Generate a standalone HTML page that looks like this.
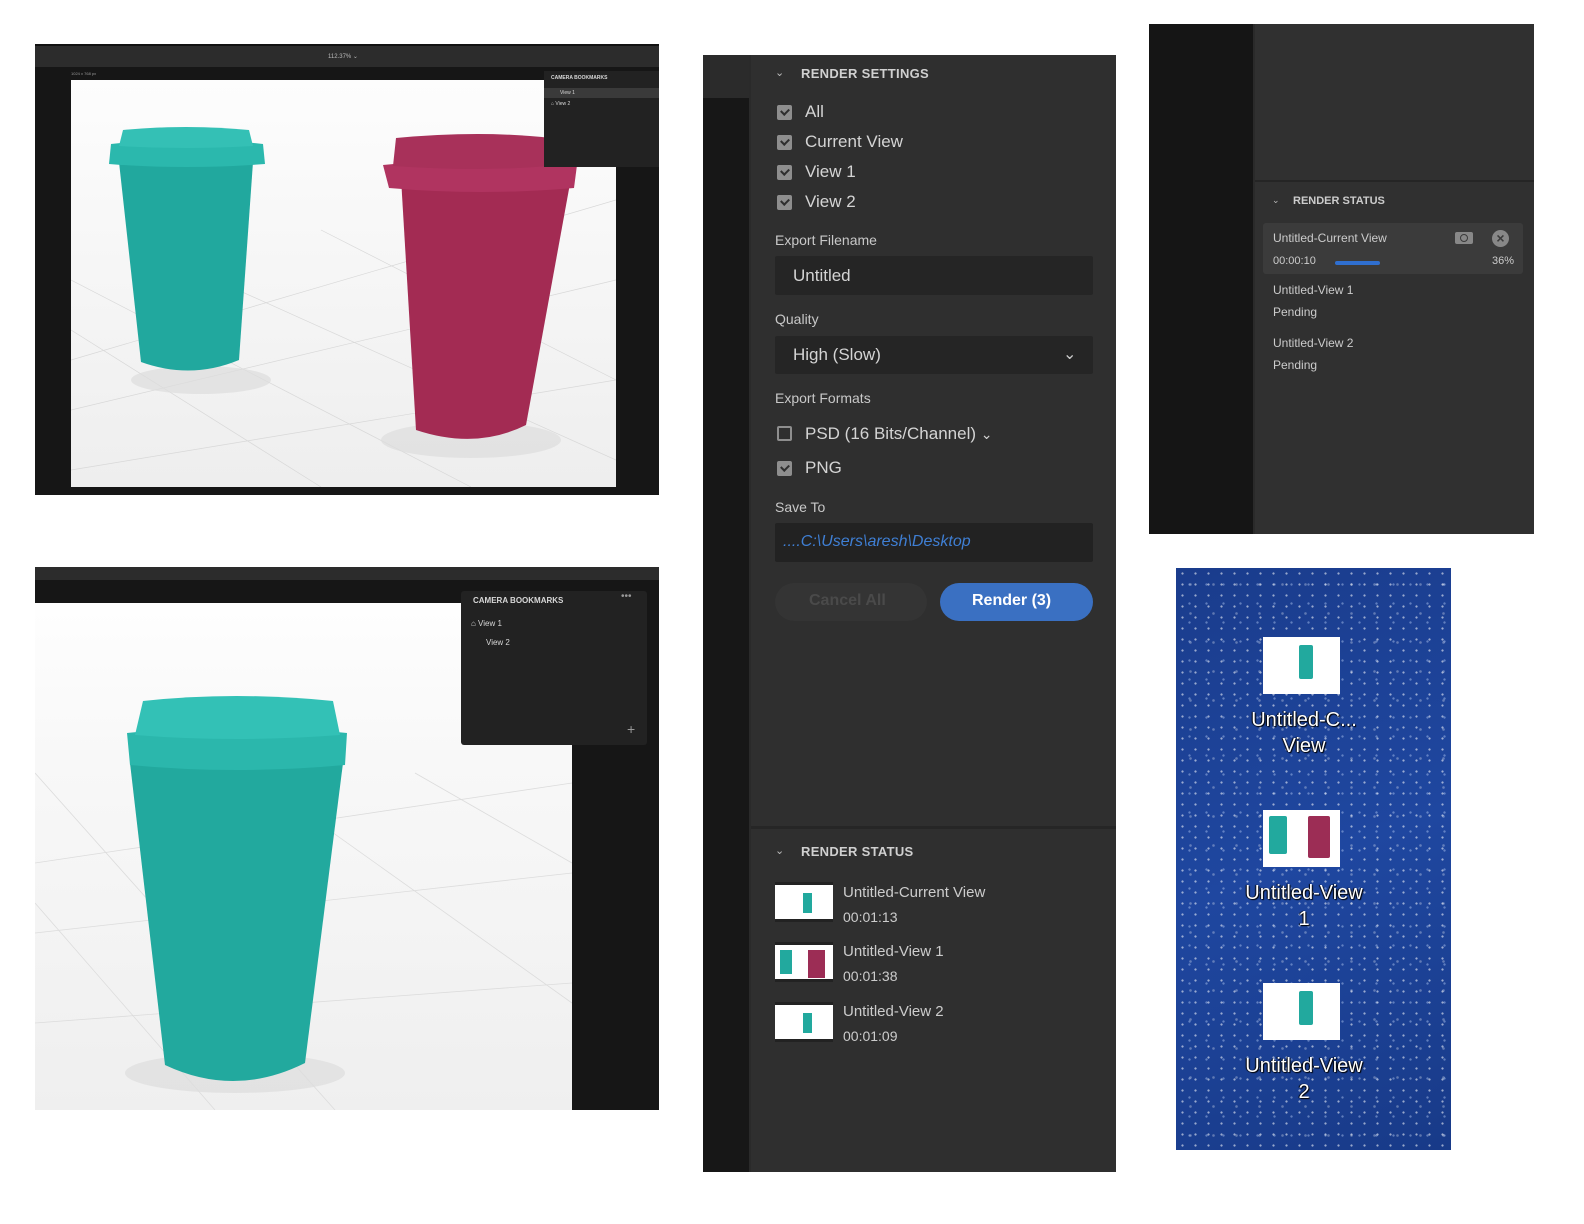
<!DOCTYPE html>
<html><head><meta charset="utf-8"><style>
*{margin:0;padding:0;box-sizing:border-box}
body{width:1584px;height:1224px;background:#fff;position:relative;overflow:hidden;font-family:"Liberation Sans",sans-serif}
.a{position:absolute}
.t{color:#d8d8d8;white-space:nowrap}
.cb{position:absolute;width:15px;height:15px;background:#8e8e8e;border-radius:2px}
.cb:after{content:"";position:absolute;left:4px;top:3px;width:6px;height:4px;border-left:2px solid #2f2f2f;border-bottom:2px solid #2f2f2f;transform:rotate(-45deg)}
.lbl{font-size:14px;color:#c8c8c8}
.big{font-size:17px;color:#d4d4d4}
.hd{font-size:13px;font-weight:bold;color:#d0d0d0;letter-spacing:.3px}
.thumb{position:absolute;width:58px;height:40px;background:#fff;border-top:3px solid #222;border-bottom:3px solid #222}
.desk{font-size:20px;color:#fff;text-shadow:1px 1px 1px #000,-1px 0 1px #000;text-align:center;width:150px;line-height:26px}
</style></head><body>

<!-- top-left viewport -->
<div class="a" style="left:35px;top:44px;width:624px;height:451px;background:#161616"></div>
<div class="a" style="left:35px;top:44px;width:624px;height:23px;background:#2c2c2c;border-top:2px solid #111"></div>
<div class="a t" style="left:328px;top:53px;font-size:6px;color:#bbb">112.37% ⌄</div>
<div class="a t" style="left:71px;top:71px;font-size:4px;color:#999">1024 x 768 px</div>
<div class="a" style="left:71px;top:80px;width:545px;height:407px;background:linear-gradient(#fdfdfd 0%,#f7f7f7 40%,#eeeeee 100%)"></div>
<svg class="a" style="left:71px;top:80px" width="545" height="407">
<g stroke="#d8d8d8" stroke-width="0.7" fill="none">
<path d="M0 280 L545 120 M0 330 L545 200 M0 390 L545 300 M0 200 L400 407 M100 180 L545 380 M250 150 L545 300 M0 250 L250 407"/>
</g>
<ellipse cx="130" cy="300" rx="70" ry="14" fill="#ddd" opacity=".7"/>
<ellipse cx="400" cy="360" rx="90" ry="18" fill="#ddd" opacity=".7"/>
<path d="M48 82 L182 82 L168 280 Q120 300 70 282 Z" fill="#21a89e"/>
<path d="M40 64 Q115 55 192 64 L194 84 Q115 90 38 84 Z" fill="#2bb8ad"/>
<path d="M52 50 Q115 44 178 50 L182 66 Q115 70 48 66 Z" fill="#34c0b5"/>
<path d="M330 98 L500 98 L455 345 Q405 370 345 350 Z" fill="#a32b53"/>
<path d="M312 85 Q410 75 506 85 L503 108 Q410 116 318 108 Z" fill="#b03460"/>
<path d="M325 58 Q410 50 480 58 L478 86 Q410 92 322 86 Z" fill="#a8315a"/>
</svg>
<div class="a" style="left:544px;top:71px;width:115px;height:96px;background:#222"></div>
<div class="a t" style="left:551px;top:75px;font-size:5px;font-weight:bold">CAMERA BOOKMARKS</div>
<div class="a" style="left:544px;top:88px;width:115px;height:10px;background:#3a3a3a"></div>
<div class="a t" style="left:560px;top:90px;font-size:5px">View 1</div>
<div class="a t" style="left:551px;top:101px;font-size:5px">⌂ View 2</div>

<!-- bottom-left viewport -->
<div class="a" style="left:35px;top:567px;width:624px;height:543px;background:#161616"></div>
<div class="a" style="left:35px;top:567px;width:624px;height:13px;background:#2c2c2c"></div>
<div class="a" style="left:35px;top:603px;width:537px;height:507px;background:linear-gradient(#fefefe 0%,#f8f8f8 30%,#efefef 100%)"></div>
<svg class="a" style="left:35px;top:603px" width="537" height="507">
<g stroke="#dcdcdc" stroke-width="0.8" fill="none">
<path d="M0 260 L537 180 M0 330 L537 270 M0 420 L537 380 M0 170 L300 507 M200 160 L537 400 M0 300 L180 507 M380 170 L537 260"/>
</g>
<ellipse cx="200" cy="470" rx="110" ry="20" fill="#ddd" opacity=".7"/>
<path d="M95 160 L308 160 L270 460 Q200 495 130 462 Z" fill="#22a99e"/>
<path d="M92 130 Q200 118 312 130 L310 162 Q200 172 95 162 Z" fill="#2bb7ac"/>
<path d="M108 98 Q200 88 298 98 L305 132 Q200 140 100 132 Z" fill="#33c1b6"/>
</svg>
<div class="a" style="left:461px;top:591px;width:186px;height:154px;background:#222;border-radius:3px"></div>
<div class="a t" style="left:473px;top:596px;font-size:8px;font-weight:bold">CAMERA BOOKMARKS</div>
<div class="a t" style="left:621px;top:591px;font-size:10px;color:#999">•••</div>
<div class="a t" style="left:471px;top:619px;font-size:8px">⌂ View 1</div>
<div class="a t" style="left:486px;top:638px;font-size:8px">View 2</div>
<div class="a t" style="left:627px;top:721px;font-size:14px;color:#999">+</div>

<!-- center panel -->
<div class="a" style="left:703px;top:55px;width:413px;height:1117px;background:#2f2f2f"></div>
<div class="a" style="left:703px;top:55px;width:46px;height:1117px;background:#171717"></div>
<div class="a" style="left:703px;top:55px;width:46px;height:43px;background:#2b2b2b"></div>
<div class="a" style="left:749px;top:55px;width:2px;height:1117px;background:#2a2a2a"></div>
<div class="a t" style="left:775px;top:66px;font-size:11px;color:#bbb">⌄</div>
<div class="a t hd" style="left:801px;top:66px">RENDER SETTINGS</div>
<div class="cb" style="left:777px;top:105px"></div><div class="a t big" style="left:805px;top:102px">All</div>
<div class="cb" style="left:777px;top:135px"></div><div class="a t big" style="left:805px;top:132px">Current View</div>
<div class="cb" style="left:777px;top:165px"></div><div class="a t big" style="left:805px;top:162px">View 1</div>
<div class="cb" style="left:777px;top:195px"></div><div class="a t big" style="left:805px;top:192px">View 2</div>
<div class="a t lbl" style="left:775px;top:232px">Export Filename</div>
<div class="a" style="left:775px;top:256px;width:318px;height:39px;background:#252525;border-radius:2px"></div>
<div class="a t big" style="left:793px;top:266px">Untitled</div>
<div class="a t lbl" style="left:775px;top:311px">Quality</div>
<div class="a" style="left:775px;top:336px;width:318px;height:38px;background:#252525;border-radius:2px"></div>
<div class="a t big" style="left:793px;top:345px">High (Slow)</div>
<div class="a t" style="left:1063px;top:344px;font-size:16px;color:#ccc">⌄</div>
<div class="a t lbl" style="left:775px;top:390px">Export Formats</div>
<div class="a" style="left:777px;top:426px;width:15px;height:15px;border:2px solid #8e8e8e;border-radius:2px"></div>
<div class="a t big" style="left:805px;top:424px">PSD (16 Bits/Channel) <span style="font-size:14px">⌄</span></div>
<div class="cb" style="left:777px;top:461px"></div><div class="a t big" style="left:805px;top:458px">PNG</div>
<div class="a t lbl" style="left:775px;top:499px">Save To</div>
<div class="a" style="left:775px;top:523px;width:318px;height:39px;background:#222;border-radius:2px"></div>
<div class="a t" style="left:783px;top:533px;font-size:16px;color:#3f7fd4;font-style:italic">....C:\Users\aresh\Desktop</div>
<div class="a" style="left:775px;top:583px;width:152px;height:38px;background:#343434;border-radius:19px"></div>
<div class="a t" style="left:809px;top:592px;font-size:16px;font-weight:bold;color:#4a4a4a">Cancel All</div>
<div class="a" style="left:940px;top:583px;width:153px;height:38px;background:#3a70c2;border-radius:19px"></div>
<div class="a t" style="left:972px;top:592px;font-size:16px;font-weight:bold;color:#fff">Render (3)</div>
<div class="a" style="left:751px;top:826px;width:365px;height:3px;background:#262626"></div>
<div class="a t" style="left:775px;top:844px;font-size:11px;color:#bbb">⌄</div>
<div class="a t hd" style="left:801px;top:844px">RENDER STATUS</div>
<div class="thumb" style="left:775px;top:882px"><div class="a" style="left:28px;top:8px;width:9px;height:20px;background:#22a99e"></div></div>
<div class="a t" style="left:843px;top:884px;font-size:15px;color:#ccc">Untitled-Current View</div>
<div class="a t" style="left:843px;top:909px;font-size:14px;color:#ccc">00:01:13</div>
<div class="thumb" style="left:775px;top:942px"><div class="a" style="left:5px;top:5px;width:12px;height:24px;background:#22a99e"></div><div class="a" style="left:33px;top:5px;width:17px;height:28px;background:#9c2d55"></div></div>
<div class="a t" style="left:843px;top:943px;font-size:15px;color:#ccc">Untitled-View 1</div>
<div class="a t" style="left:843px;top:968px;font-size:14px;color:#ccc">00:01:38</div>
<div class="thumb" style="left:775px;top:1002px"><div class="a" style="left:28px;top:8px;width:9px;height:20px;background:#22a99e"></div></div>
<div class="a t" style="left:843px;top:1003px;font-size:15px;color:#ccc">Untitled-View 2</div>
<div class="a t" style="left:843px;top:1028px;font-size:14px;color:#ccc">00:01:09</div>

<!-- right top panel -->
<div class="a" style="left:1149px;top:24px;width:385px;height:510px;background:#303030"></div>
<div class="a" style="left:1149px;top:24px;width:104px;height:510px;background:#151515"></div>
<div class="a" style="left:1253px;top:24px;width:2px;height:510px;background:#2a2a2a"></div>
<div class="a" style="left:1255px;top:180px;width:279px;height:2px;background:#252525"></div>
<div class="a t" style="left:1272px;top:195px;font-size:9px;color:#bbb">⌄</div>
<div class="a t" style="left:1293px;top:195px;font-size:11px;font-weight:bold;color:#ccc">RENDER STATUS</div>
<div class="a" style="left:1263px;top:223px;width:260px;height:51px;background:#3b3b3b;border-radius:3px"></div>
<div class="a t" style="left:1273px;top:231px;font-size:12px;color:#ccc">Untitled-Current View</div>
<div class="a" style="left:1455px;top:232px;width:18px;height:12px;background:#888;border-radius:2px"></div>
<div class="a" style="left:1460px;top:234px;width:8px;height:8px;border:1.5px solid #3b3b3b;border-radius:50%"></div>
<div class="a" style="left:1492px;top:230px;width:17px;height:17px;background:#888;border-radius:50%;color:#3b3b3b;font-size:14px;font-weight:bold;text-align:center;line-height:17px">×</div>
<div class="a t" style="left:1273px;top:255px;font-size:11px;color:#ccc">00:00:10</div>
<div class="a" style="left:1335px;top:261px;width:45px;height:4px;background:#2f6fd0;border-radius:2px"></div>
<div class="a t" style="left:1492px;top:255px;font-size:11px;color:#ccc">36%</div>
<div class="a t" style="left:1273px;top:283px;font-size:12px;color:#ccc">Untitled-View 1</div>
<div class="a t" style="left:1273px;top:305px;font-size:12px;color:#ccc">Pending</div>
<div class="a t" style="left:1273px;top:336px;font-size:12px;color:#ccc">Untitled-View 2</div>
<div class="a t" style="left:1273px;top:358px;font-size:12px;color:#ccc">Pending</div>

<!-- desktop -->
<div class="a" style="left:1176px;top:568px;width:275px;height:582px;background:radial-gradient(circle,rgba(255,255,255,.55) 0.8px,transparent 1.4px) 0 0/13px 11px,radial-gradient(circle,rgba(200,220,255,.4) 0.8px,transparent 1.5px) 5px 7px/17px 19px,radial-gradient(circle,rgba(255,255,255,.3) 1px,transparent 1.6px) 3px 2px/23px 29px,linear-gradient(160deg,#1a3c8c,#1f47a0 50%,#183a88)"></div>
<div class="a" style="left:1263px;top:637px;width:77px;height:57px;background:#fff"><div class="a" style="left:36px;top:8px;width:14px;height:34px;background:#22a99e;border-radius:2px"></div></div>
<div class="a desk" style="left:1229px;top:707px">Untitled-C...<br>View</div>
<div class="a" style="left:1263px;top:810px;width:77px;height:57px;background:#fff"><div class="a" style="left:6px;top:6px;width:18px;height:38px;background:#22a99e;border-radius:2px"></div><div class="a" style="left:45px;top:6px;width:22px;height:42px;background:#9c2d55;border-radius:2px"></div></div>
<div class="a desk" style="left:1229px;top:880px">Untitled-View<br>1</div>
<div class="a" style="left:1263px;top:983px;width:77px;height:57px;background:#fff"><div class="a" style="left:36px;top:8px;width:14px;height:34px;background:#22a99e;border-radius:2px"></div></div>
<div class="a desk" style="left:1229px;top:1053px">Untitled-View<br>2</div>
</body></html>
